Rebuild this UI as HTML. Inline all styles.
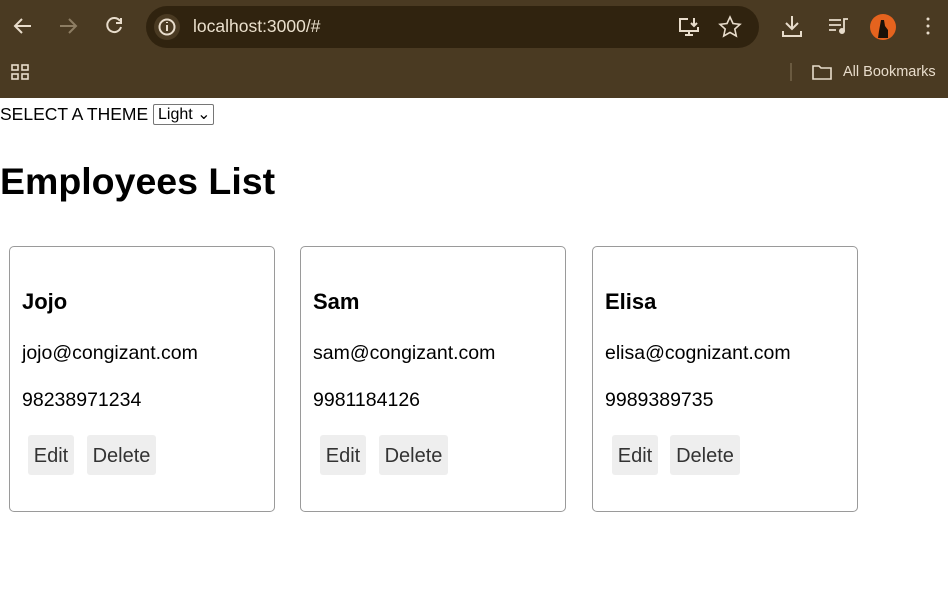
<!DOCTYPE html>
<html><head><style>
*{margin:0;padding:0;box-sizing:border-box}
body{width:948px;height:608px;overflow:hidden;background:#fff;font-family:"Liberation Sans",sans-serif;position:relative}
.top{position:absolute;left:0;top:0;width:948px;height:98px;background:#4a3a22}
.addr{position:absolute;left:146px;top:6px;width:613px;height:42px;border-radius:21px;background:#30230f}
.url{position:absolute;left:193px;top:16px;color:#eadfcc;font-size:17.5px}
.bm{position:absolute;left:843px;top:64px;color:#e8dccb;font-size:14.5px}
.ab{position:absolute}
.card{position:absolute;top:246px;width:266px;height:266px;border:1px solid #9a9a9a;border-radius:5px}
.card h3{position:absolute;left:12px;top:42px;font-size:22px;font-weight:bold}
.card .e{position:absolute;left:12px;top:95px;font-size:19.5px}
.card .p{position:absolute;left:12px;top:142px;font-size:19.5px}
.btn{position:absolute;top:188px;height:40px;background:#eee;border-radius:3px;color:#333;font-size:20px;line-height:43px;text-align:center}
</style></head><body>
<div class="top">
<div class="addr"></div>
<svg class="ab" style="left:0;top:0" width="948" height="98" fill="none" stroke="#e8dccb" stroke-width="2">
<path d="M31 26H15M22 19l-7 7 7 7"/>
<path d="M60 26h16M69 19l7 7-7 7" stroke="#8d7d63"/>
<path d="M120 21a7 7 0 1 0 1 6M121 18v5h-5"/>
<circle cx="167" cy="27" r="13" fill="#4a3a22" stroke="none"/>
<circle cx="167" cy="27" r="7.5"/><path d="M167 25v6M167 22v1"/>
<path d="M688 19h-8v12h18v-4M685 35h8M689 31v4M694 18v8M691 23l3 3 3-3"/>
<path d="M730 17l3 6.5 7 .8-5.2 4.7 1.5 7-6.3-3.6-6.3 3.6 1.5-7-5.2-4.7 7-.8z" stroke-width="1.6"/>
<path d="M792 16v13M786 23l6 6 6-6M783 31v5h18v-5"/>
<path d="M829 20h12M829 25h12M829 30h7M844 31v-12h4" stroke-width="1.8"/>
<circle cx="842" cy="31" r="2" fill="#e8dccb"/>
<circle cx="928" cy="19" r="1.5" fill="#e8dccb" stroke="none"/><circle cx="928" cy="26" r="1.5" fill="#e8dccb" stroke="none"/><circle cx="928" cy="33" r="1.5" fill="#e8dccb" stroke="none"/>
<rect x="12" y="65" width="6" height="5" stroke-width="1.6"/><rect x="22" y="65" width="6" height="5" stroke-width="1.6"/><rect x="12" y="74" width="6" height="5" stroke-width="1.6"/><rect x="22" y="74" width="6" height="5" stroke-width="1.6"/>
<path d="M791 63v18" stroke="#6a5a40"/>
<path d="M813 66h6l2 2h10v11h-18z" stroke-width="1.6"/>
</svg>
<svg class="ab" style="left:870px;top:14px" width="26" height="26"><circle cx="13" cy="13" r="13" fill="#e5631e"/><path d="M11 6h3l1 6 3 4v8h-10l1-7z" fill="#1a1108"/></svg>
<div class="url">localhost:3000/#</div>
<div class="bm">All Bookmarks</div>
</div>
<div class="ab" style="left:0;top:104px;font-size:17.5px">SELECT A THEME <span style="display:inline-block;border:1px solid #767676;border-radius:2px;font-size:16px;padding:0 2px 0 4px;line-height:19px;vertical-align:1px">Light &#8964;</span></div>
<div class="ab" style="left:0;top:160px;font-size:37.5px;font-weight:bold">Employees List</div>
<div class="card" style="left:9px"><h3>Jojo</h3><div class="e">jojo@congizant.com</div><div class="p">98238971234</div><div class="btn" style="left:18px;width:46px">Edit</div><div class="btn" style="left:77px;width:69px">Delete</div></div>
<div class="card" style="left:300px"><h3>Sam</h3><div class="e">sam@congizant.com</div><div class="p">9981184126</div><div class="btn" style="left:19px;width:46px">Edit</div><div class="btn" style="left:78px;width:69px">Delete</div></div>
<div class="card" style="left:592px"><h3>Elisa</h3><div class="e">elisa@cognizant.com</div><div class="p">9989389735</div><div class="btn" style="left:19px;width:46px">Edit</div><div class="btn" style="left:77px;width:70px">Delete</div></div>
</body></html>
